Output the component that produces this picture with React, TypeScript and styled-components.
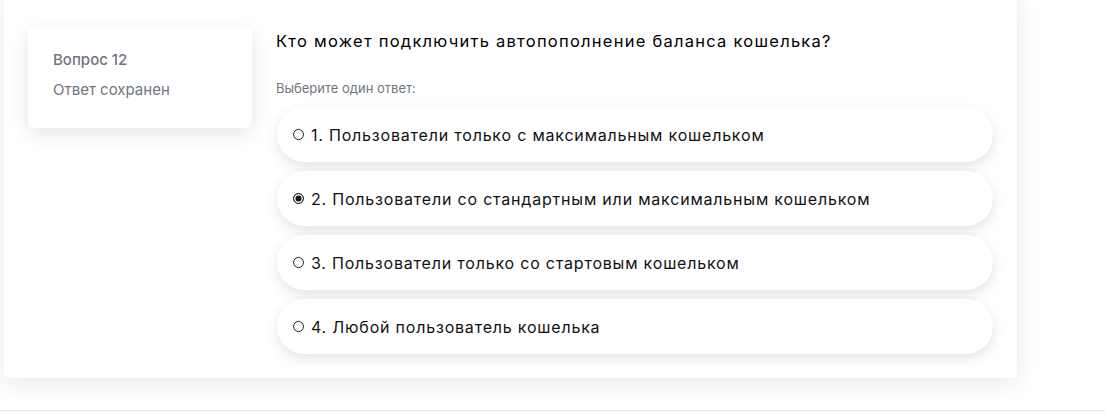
import React from 'react'
import styled, { createGlobalStyle } from 'styled-components'

const variables = {
  text: '#111111',
  muted: '#6f7680',
  shadow: 'rgba(0, 0, 0, 0.09)'
}

const GlobalStyle = createGlobalStyle`
  * { box-sizing: border-box; }
  body {
    margin: 0;
    background: #ffffff;
    font-family: Inter, "Noto Sans", sans-serif;
    color: ${variables.text};
  }
`

const Page = styled.div`
  width: 1105px;
  height: 413px;
  overflow: hidden;
`

const Card = styled.div`
  width: 1013px;
  margin: -10px 0 0 4px;
  padding: 37px 24px 24px 24px;
  background: #fff;
  border-radius: 5px;
  box-shadow: 0 6px 24px ${variables.shadow};
  display: grid;
  grid-template-columns: 224px 1fr;
  column-gap: 24px;
  align-items: start;
`

const Info = styled.div`
  height: 101px;
  padding: 24px 25px 0;
  background: #fff;
  border-radius: 5px;
  box-shadow: 0 6px 20px rgba(0, 0, 0, 0.1);
  display: flex;
  flex-direction: column;
  gap: 12px;
`

const InfoTitle = styled.div`
  font-size: 15px;
  font-weight: 500;
  line-height: 18px;
  color: ${variables.muted};
`

const InfoStatus = styled.div`
  font-size: 15px;
  line-height: 18px;
  color: ${variables.muted};
`

const Content = styled.div`
  display: flex;
  flex-direction: column;
`

const Question = styled.div`
  font-size: 16.5px;
  font-weight: 400;
  letter-spacing: 1.25px;
  line-height: 20px;
  margin-top: 4px;
  color: #000;
`

const Hint = styled.div`
  font-size: 13px;
  line-height: 16px;
  color: ${variables.muted};
  margin-top: 29px;
`

const Options = styled.div`
  display: flex;
  flex-direction: column;
  gap: 9px;
  margin-top: 11px;
  padding-left: 1px;
`

const Option = styled.label`
  height: 55px;
  padding: 0 16px;
  background: #fff;
  border-radius: 28px;
  box-shadow: 0 5px 14px rgba(0, 0, 0, 0.11);
  display: flex;
  align-items: center;
  gap: 7px;
  font-size: 16px;
  font-weight: 400;
  letter-spacing: 0.8px;
  color: ${variables.text};
  cursor: pointer;
`

const Radio = styled.span<{ checked?: boolean }>`
  width: 11px;
  height: 11px;
  border-radius: 50%;
  border: 1px solid #222;
  flex-shrink: 0;
  background: ${props => (props.checked ? '#111' : '#fff')};
  box-shadow: ${props => (props.checked ? 'inset 0 0 0 1.5px #fff' : 'none')};
`

const Divider = styled.div`
  margin-top: 32px;
  height: 3px;
  border-top: 1px solid #e3e3e3;
  background: #fafafa;
`

const answers = [
  '1. Пользователи только с максимальным кошельком',
  '2. Пользователи со стандартным или максимальным кошельком',
  '3. Пользователи только со стартовым кошельком',
  '4. Любой пользователь кошелька'
]

const App: React.FC = () => {
  const selected = 1

  return (
    <Page>
      <GlobalStyle />
      <Card>
        <Info>
          <InfoTitle>Вопрос 12</InfoTitle>
          <InfoStatus>Ответ сохранен</InfoStatus>
        </Info>
        <Content>
          <Question>Кто может подключить автопополнение баланса кошелька?</Question>
          <Hint>Выберите один ответ:</Hint>
          <Options>
            {answers.map((item, i) => (
              <Option key={item}>
                <Radio checked={i === selected} />
                {item}
              </Option>
            ))}
          </Options>
        </Content>
      </Card>
      <Divider />
    </Page>
  )
}

export default App
